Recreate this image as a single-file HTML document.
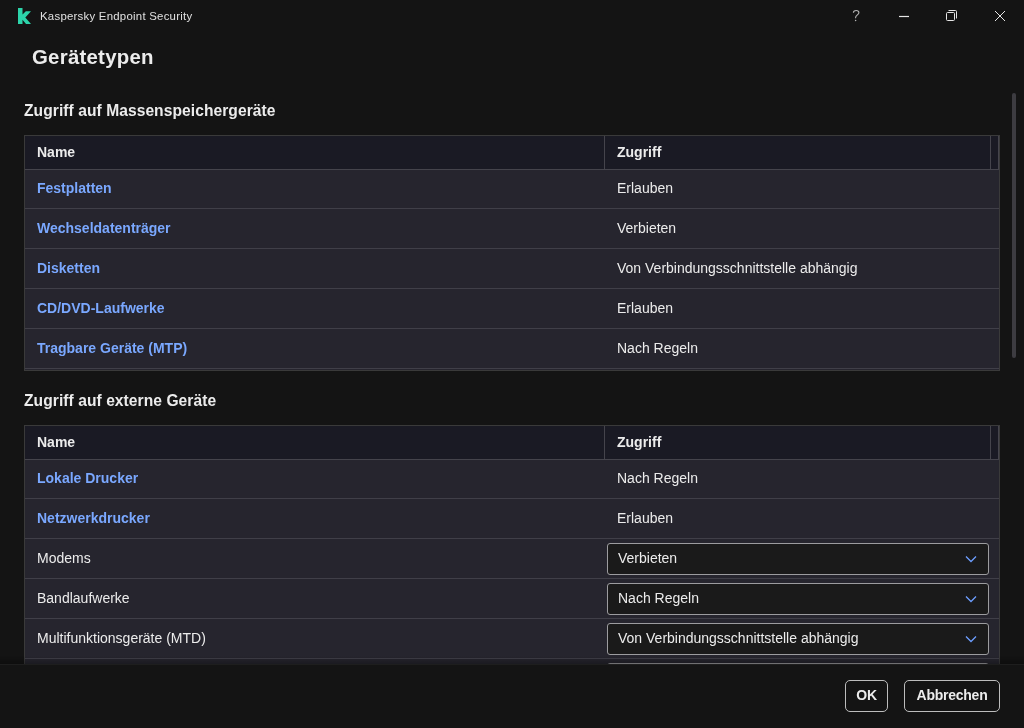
<!DOCTYPE html>
<html><head><meta charset="utf-8">
<style>
*{box-sizing:border-box;margin:0;padding:0}
html,body{-webkit-font-smoothing:antialiased;width:1024px;height:728px;overflow:hidden;background:#141414;font-family:"Liberation Sans",sans-serif;color:#ececec}
.abs{position:absolute}
.title{left:40px;top:9px;font-size:11.4px;color:#e0e0e0;letter-spacing:0.25px;line-height:14px;white-space:nowrap}
.h1{left:32px;top:45px;font-size:20.4px;letter-spacing:0.25px;font-weight:bold;color:#ececec;line-height:24px;white-space:nowrap}
.h2{font-size:15.6px;letter-spacing:0.06px;font-weight:bold;color:#ececec;line-height:18px;white-space:nowrap;left:24px}
.tbl{left:24px;width:976px;border:1px solid #3a3a3a;background:#26252e;overflow:hidden}
.hdr{position:absolute;left:0;top:0;width:974px;height:34px;background:#1a1a24;border-bottom:1px solid #45444c}
.hdr .c1{position:absolute;left:12px;top:0;line-height:33px;font-size:14px;font-weight:bold;color:#ececec}
.hdr .c2{position:absolute;left:592px;top:0;line-height:33px;font-size:14px;font-weight:bold;color:#ececec}
.vd{position:absolute;top:0;width:1px;height:33px;background:#45444c}
.row{position:absolute;left:0;width:974px;border-bottom:1px solid #403f48}
.row .n{position:absolute;left:12px;font-size:14px;white-space:nowrap}
.row .v{position:absolute;left:592px;font-size:14px;white-space:nowrap;color:#ececec}
.link{color:#7aa8ff;font-weight:bold}
.dd{position:absolute;left:582px;width:382px;height:32px;border:1px solid #9c9c9f;border-radius:3px;background:#1a1a1a}
.dd span{position:absolute;left:10px;top:-1px;line-height:30px;font-size:14px;color:#ececec;white-space:nowrap}
.dd svg{position:absolute;left:357px;top:11px}
.footer{left:0;top:664px;width:1024px;height:64px;background:#141414;border-top:1px solid #1e1e1e}
.btn{position:absolute;top:680px;height:32px;border:1px solid #bdbdbd;border-radius:5px;font-size:14px;letter-spacing:-0.25px;font-weight:bold;color:#ececec;text-align:center;line-height:29px;background:#141414}
.sb{left:1012px;top:93px;width:4px;height:265px;border-radius:2px;background:#3d3c41}
</style></head><body><div id="root" style="position:absolute;left:0;top:0;width:1024px;height:728px;will-change:transform">
<svg class="abs" style="left:0;top:0" width="40" height="32" viewBox="0 0 40 32">
<path d="M18 8H22.5V14.5L25.8 11.3H31L25.3 17.5L31 23.9H26L22.5 19.7V23.9H18Z" fill="#2cd4aa"/>
</svg>
<div class="abs title">Kaspersky Endpoint Security</div>
<!-- window controls -->
<svg class="abs" style="left:840px;top:0" width="184" height="32" viewBox="840 0 184 32">
<path d="M853.4 12.7C853.4 11.2 854.6 10.5 856.2 10.5C857.8 10.5 858.9 11.4 858.9 12.7C858.9 14.6 855.6 15.2 855.6 17.5V18.3" fill="none" stroke="#b3b3b3" stroke-width="1.1"/>
<circle cx="855.6" cy="20.5" r="0.75" fill="#b3b3b3"/>
<path d="M899 16.5H909" stroke="#e6e6e6" stroke-width="1.2"/>
<rect x="946.5" y="12.5" width="8" height="8" rx="1" fill="none" stroke="#e6e6e6" stroke-width="1"/>
<path d="M948.5 10.5H955.5Q956.5 10.5 956.5 11.5V18.5" fill="none" stroke="#e6e6e6" stroke-width="1"/>
<path d="M995 11L1005 21M1005 11L995 21" stroke="#e6e6e6" stroke-width="1"/>
</svg>
<div class="abs h1">Gerätetypen</div>
<div class="abs h2" style="top:101.5px">Zugriff auf Massenspeichergeräte</div>
<div class="abs tbl" style="top:135px;height:236px">
 <div class="hdr"><div class="c1">Name</div><div class="vd" style="left:579px"></div><div class="c2">Zugriff</div><div class="vd" style="left:965px"></div><div class="vd" style="left:973px"></div></div>
 <div class="row" style="top:34px;height:39px"><div class="n link" style="top:10px">Festplatten</div><div class="v" style="top:10px">Erlauben</div></div>
 <div class="row" style="top:73px;height:40px"><div class="n link" style="top:11px">Wechseldatenträger</div><div class="v" style="top:11px">Verbieten</div></div>
 <div class="row" style="top:113px;height:40px"><div class="n link" style="top:11px">Disketten</div><div class="v" style="top:11px">Von Verbindungsschnittstelle abhängig</div></div>
 <div class="row" style="top:153px;height:40px"><div class="n link" style="top:11px">CD/DVD-Laufwerke</div><div class="v" style="top:11px">Erlauben</div></div>
 <div class="row" style="top:193px;height:40px"><div class="n link" style="top:11px">Tragbare Geräte (MTP)</div><div class="v" style="top:11px">Nach Regeln</div></div>
</div>
<div class="abs h2" style="top:391.5px">Zugriff auf externe Geräte</div>
<div class="abs tbl" style="top:425px;height:300px">
 <div class="hdr"><div class="c1">Name</div><div class="vd" style="left:579px"></div><div class="c2">Zugriff</div><div class="vd" style="left:965px"></div><div class="vd" style="left:973px"></div></div>
 <div class="row" style="top:34px;height:39px"><div class="n link" style="top:10px">Lokale Drucker</div><div class="v" style="top:10px">Nach Regeln</div></div>
 <div class="row" style="top:73px;height:40px"><div class="n link" style="top:11px">Netzwerkdrucker</div><div class="v" style="top:11px">Erlauben</div></div>
 <div class="row" style="top:113px;height:40px"><div class="n" style="top:11px">Modems</div><div class="dd" style="top:4px"><span>Verbieten</span><svg width="12" height="8" viewBox="0 0 12 8"><path d="M1 1.5L6 6.5L11 1.5" fill="none" stroke="#6d9eff" stroke-width="1.3"/></svg></div></div>
 <div class="row" style="top:153px;height:40px"><div class="n" style="top:11px">Bandlaufwerke</div><div class="dd" style="top:4px"><span>Nach Regeln</span><svg width="12" height="8" viewBox="0 0 12 8"><path d="M1 1.5L6 6.5L11 1.5" fill="none" stroke="#6d9eff" stroke-width="1.3"/></svg></div></div>
 <div class="row" style="top:193px;height:40px"><div class="n" style="top:11px">Multifunktionsgeräte (MTD)</div><div class="dd" style="top:4px"><span>Von Verbindungsschnittstelle abhängig</span><svg width="12" height="8" viewBox="0 0 12 8"><path d="M1 1.5L6 6.5L11 1.5" fill="none" stroke="#6d9eff" stroke-width="1.3"/></svg></div></div>
 <div class="row" style="top:233px;height:40px"><div class="n" style="top:11px">Smartcard-Lesegeräte</div><div class="dd" style="top:4px"><span>Erlauben</span></div></div>
</div>
<div class="abs" style="left:0;top:656px;width:1024px;height:8px;background:linear-gradient(rgba(0,0,0,0),rgba(0,0,0,0.3))"></div>
<div class="abs footer"></div>
<div class="btn" style="left:845px;width:43px">OK</div>
<div class="btn" style="left:904px;width:96px">Abbrechen</div>
<div class="abs sb"></div>
</div></body></html>
